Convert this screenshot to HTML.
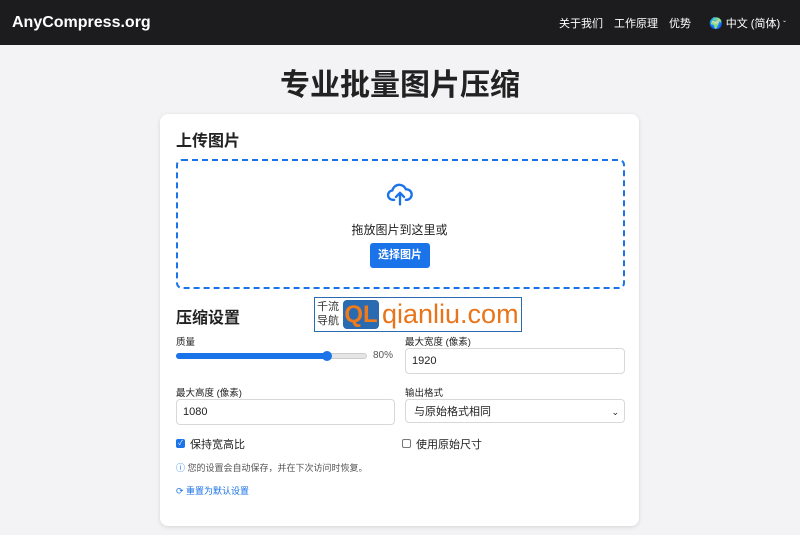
<!DOCTYPE html><html><head><meta charset="utf-8"><style>
*{box-sizing:border-box;margin:0;padding:0}
body{width:800px;height:535px;overflow:hidden;background:#f3f3f5;font-family:"Liberation Sans","Noto Sans CJK SC",sans-serif;color:#222;position:relative}
.nav{height:45px;background:#1c1c1e;color:#fff;position:relative}
.brand{position:absolute;left:12px;top:14px;font-size:16px;font-weight:bold}
.nav span{position:absolute;top:15px;font-size:11px}
h1{position:absolute;top:60px;width:800px;text-align:center;font-size:30px;font-weight:bold;color:#222}
.card{position:absolute;left:160px;top:114px;width:479px;height:412px;background:#fff;border-radius:8px;box-shadow:0 1px 4px rgba(0,0,0,.12)}
.a{position:absolute}
.h{font-size:16px;font-weight:bold}
.drop{left:16px;top:45px;width:449px;height:130px;border:2px dashed #1a73e8;border-radius:6px}
.btn{background:#1a73e8;color:#fff;font-size:11px;font-weight:bold;border-radius:3px;text-align:center;line-height:25px}
.lbl{font-size:9.5px}
.inp{border:1px solid #d8d8d8;border-radius:4px;font-size:11px;padding-left:6px;line-height:24px}
.cb{width:9px;height:9px;border:1px solid #777;border-radius:2px}
</style></head><body>
<div class="nav"><div class="brand">AnyCompress.org</div>
<span style="left:559px">关于我们</span><span style="left:614px">工作原理</span><span style="left:669px">优势</span>
<span style="left:709px">🌍 中文 (简体) <small style="font-size:8px">ˇ</small></span></div>
<h1>专业批量图片压缩</h1>
<div class="card">
<div class="a h" style="left:16px;top:13px">上传图片</div>
<div class="a drop"></div>
<svg class="a" style="left:226px;top:66px" width="28" height="28" viewBox="0 0 24 24" fill="none" stroke="#1a73e8" stroke-width="2" stroke-linecap="round" stroke-linejoin="round"><path d="M7 17H6a4 4 0 0 1-.5-8A6 6 0 0 1 17 8a4 4 0 0 1 1 9h-1"/><path d="M12 21V11M8.5 14.5L12 11l3.5 3.5"/></svg>
<div class="a" style="left:0;width:479px;text-align:center;top:107px;font-size:12px">拖放图片到这里或</div>
<div class="a btn" style="left:210px;top:129px;width:60px">选择图片</div>
<div class="a h" style="left:16px;top:190px">压缩设置</div>
<div class="a lbl" style="left:16px;top:220px">质量</div>
<div class="a" style="left:16px;top:239px;width:191px;height:6px;border-radius:3px;background:#e5e5e5;border:1px solid #ccc"></div>
<div class="a" style="left:16px;top:239px;width:151px;height:6px;border-radius:3px;background:#1a73e8"></div>
<div class="a" style="left:162px;top:237px;width:10px;height:10px;border-radius:50%;background:#1a73e8"></div>
<div class="a" style="left:213px;top:236px;font-size:10px;color:#555">80%</div>
<div class="a lbl" style="left:245px;top:220px">最大宽度 (像素)</div>
<div class="a inp" style="left:245px;top:234px;width:220px;height:26px">1920</div>
<div class="a lbl" style="left:16px;top:271px">最大高度 (像素)</div>
<div class="a inp" style="left:16px;top:285px;width:219px;height:26px">1080</div>
<div class="a lbl" style="left:245px;top:271px">输出格式</div>
<div class="a inp" style="left:245px;top:285px;width:220px;height:24px;padding-left:8px">与原始格式相同<span style="position:absolute;right:5px;font-size:9px">⌄</span></div>
<div class="a cb" style="left:16px;top:325px;background:#1a73e8;border-color:#1a73e8;color:#fff;font-size:7px;line-height:8px;text-align:center">✓</div>
<div class="a" style="left:30px;top:322px;font-size:11px">保持宽高比</div>
<div class="a cb" style="left:242px;top:325px"></div>
<div class="a" style="left:256px;top:322px;font-size:11px">使用原始尺寸</div>
<div class="a" style="left:16px;top:347px;font-size:9px;color:#555"><span style="color:#1a73e8">ⓘ</span> 您的设置会自动保存，并在下次访问时恢复。</div>
<div class="a" style="left:16px;top:370px;font-size:9px;color:#1a73e8">⟳ 重置为默认设置</div>
</div>
<div class="a" style="left:314px;top:297px;width:208px;height:35px;background:#fff;border:1px solid #2a6ab0">
<div class="a" style="left:2px;top:2px;font-size:11px;line-height:14px;color:#333">千流<br>导航</div>
<div class="a" style="left:28px;top:2px;width:36px;height:29px;background:#2a6ab0;border-radius:4px;color:#f07a1a;font-size:24px;font-weight:bold;line-height:29px;text-align:center">QL</div>
<div class="a" style="left:67px;top:0;font-size:27px;color:#e8751a;line-height:33px">qianliu.com</div>
</div>
</body></html>
